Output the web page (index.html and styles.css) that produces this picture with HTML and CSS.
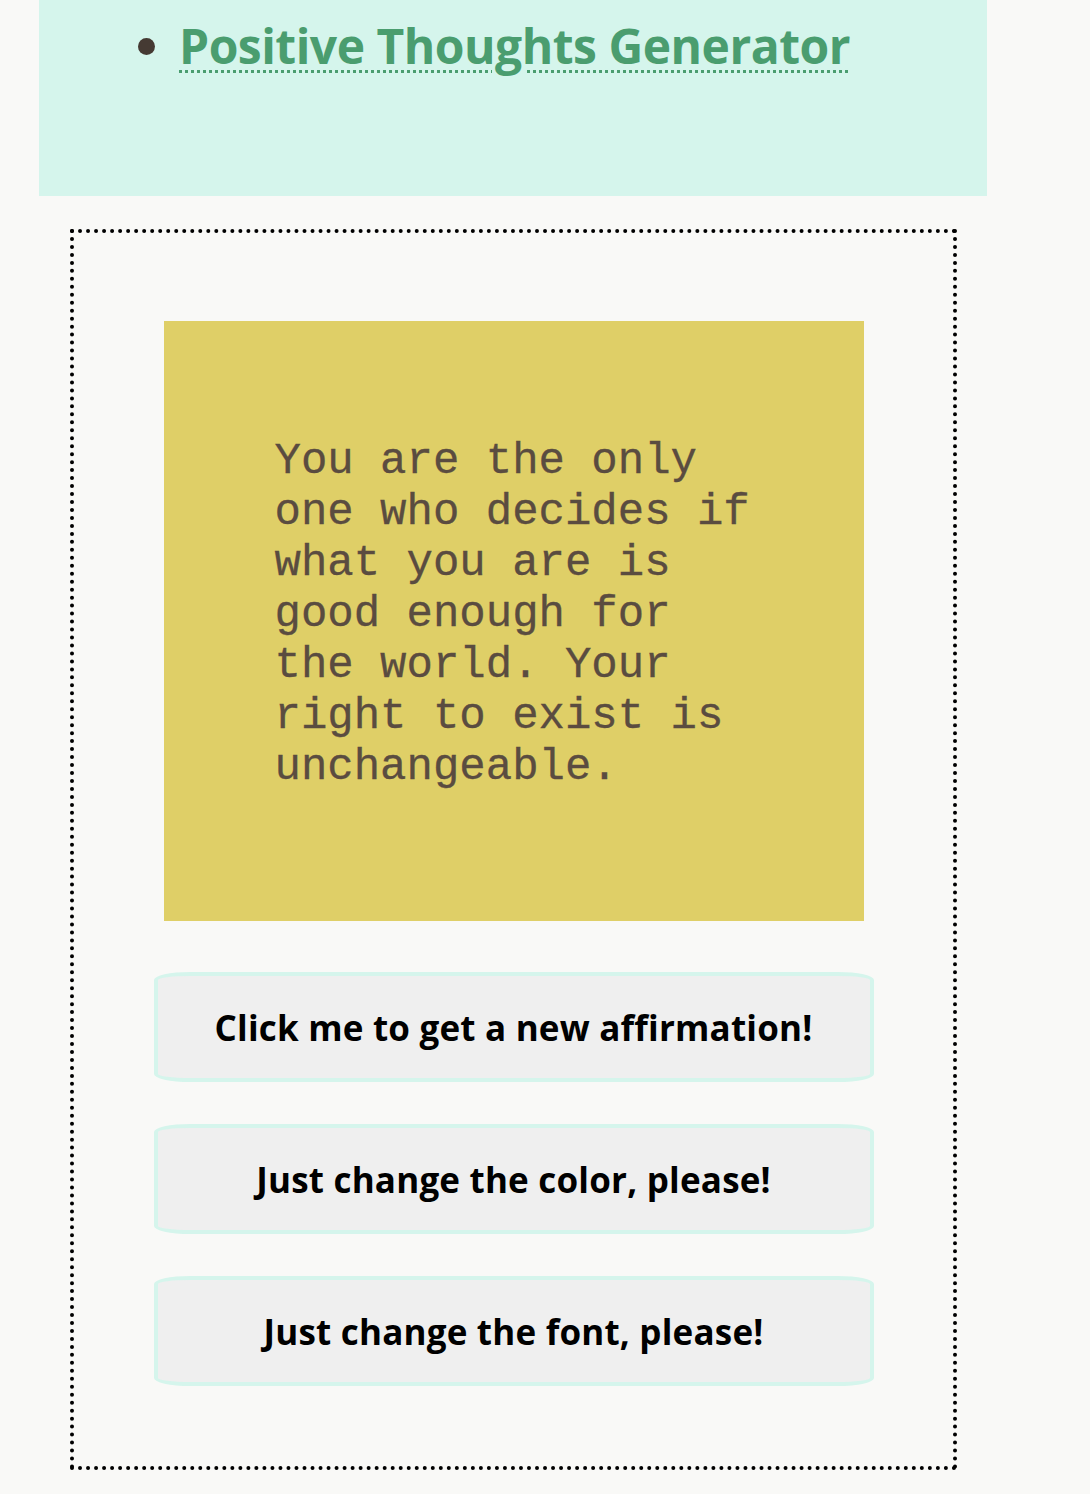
FILE: index.html
```html
<!DOCTYPE html>
<html lang="en">
<head>
<meta charset="utf-8">
<title>Positive Thoughts Generator</title>
<link rel="stylesheet" href="styles.css">
</head>
<body>
<header class="top">
  <ul class="nav">
    <li><a class="title-link" href="#">Positive Thoughts Generator</a></li>
  </ul>
</header>
<main class="frame">
  <div class="card">
    <p class="quote">You are the only one who decides if what you are is good enough for the world. Your right to exist is unchangeable.</p>
  </div>
  <button class="btn">Click me to get a new affirmation!</button>
  <button class="btn">Just change the color, please!</button>
  <button class="btn">Just change the font, please!</button>
</main>
</body>
</html>
```
FILE: styles.css
```css
html, body {
  margin: 0;
  padding: 0;
  background: #f9f9f7;
}
body {
  width: 1090px;
  height: 1494px;
  overflow: hidden;
  font-family: "Open Sans", "Noto Sans", sans-serif;
}
.top {
  margin-left: 39px;
  width: 948px;
  height: 196px;
  background: #d5f5ec;
  box-sizing: border-box;
  padding-top: 14px;
}
.nav {
  margin: 0;
  padding-left: 140px;
  color: #453a33;
  font-size: 48px;
  line-height: 64px;
}
.title-link {
  color: #4a9d6f;
  font-weight: 700;
  letter-spacing: -0.5px;
  text-decoration: underline dotted #4a9d6f;
  text-decoration-thickness: 3px;
  text-underline-offset: 6px;
}
.frame {
  margin: 33px 0 0 70px;
  width: 887px;
  height: 1241px;
  box-sizing: border-box;
  border: 4px dotted #000;
  display: flex;
  flex-direction: column;
  align-items: center;
  padding-top: 88px;
}
.card {
  width: 700px;
  height: 600px;
  background: #dfcf67;
  box-sizing: border-box;
  padding: 0 111px 14px;
  display: flex;
  align-items: center;
  margin-bottom: 51px;
}
.quote {
  margin: 0;
  font-family: "Courier New", "Nimbus Mono PS", "FreeMono", "Liberation Mono", monospace;
  font-size: 44px;
  line-height: 51px;
  color: #5a4c40;
  -webkit-text-stroke: 0.3px #5a4c40;
}
.btn {
  width: 720px;
  height: 110px;
  margin-bottom: 42px;
  background: #efefef;
  border: 4px solid #d5f5ec;
  border-radius: 36px / 8px;
  font-family: "Open Sans", "Noto Sans", sans-serif;
  font-weight: 700;
  font-size: 35px;
  letter-spacing: 0.2px;
  color: #000;
}
```
